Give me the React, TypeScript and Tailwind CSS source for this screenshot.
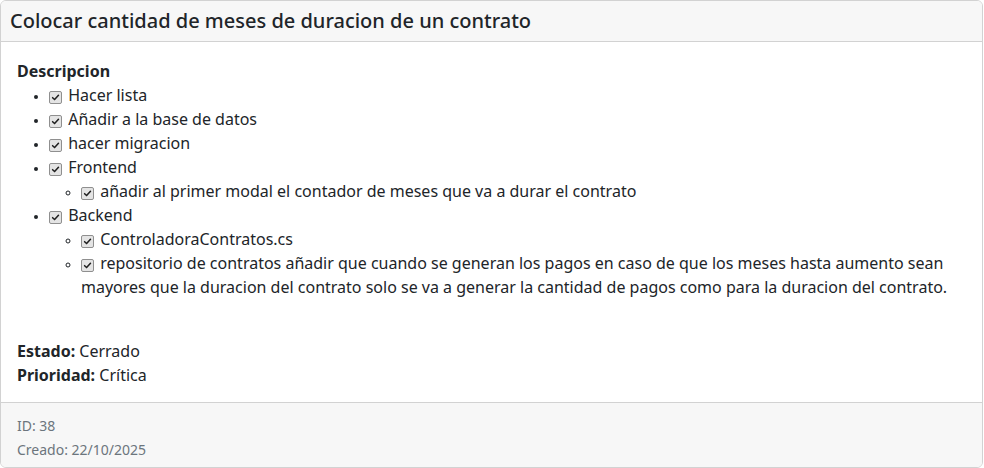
import React from "react";

type Tarea = { texto: string; hijos?: string[] };

const tareas: Tarea[] = [
  { texto: "Hacer lista" },
  { texto: "Añadir a la base de datos" },
  { texto: "hacer migracion" },
  { texto: "Frontend", hijos: ["añadir al primer modal el contador de meses que va a durar el contrato"] },
  {
    texto: "Backend",
    hijos: [
      "ControladoraContratos.cs",
      "repositorio de contratos añadir que cuando se generan los pagos en caso de que los meses hasta aumento sean mayores que la duracion del contrato solo se va a generar la cantidad de pagos como para la duracion del contrato.",
    ],
  },
];

// checkbox marcado y deshabilitado, dibujado a mano
function Check() {
  return (
    <span className="inline-flex items-center justify-center w-[13px] h-[13px] mr-[2px] align-[-1px] rounded-[2px] border border-[#8f8f8f] bg-[#e4e4e4]">
      <svg viewBox="0 0 10 10" className="w-[9px] h-[9px]">
        <path d="M1.8 5.2 L4 7.3 L8.3 2.6" fill="none" stroke="#1f1f1f" strokeWidth="1.7" strokeLinecap="round" strokeLinejoin="round" />
      </svg>
    </span>
  );
}

export default function App() {
  return (
    <div className="w-[983px] h-[468px] bg-white text-[#212529] font-['Noto_Sans',sans-serif] text-base leading-6">
      <div className="h-full flex flex-col border border-[#d2d2d2] rounded-md overflow-hidden">
        <div className="bg-[#f7f7f7] border-b border-[#d2d2d2] px-[9px] py-2">
          <h5 className="text-xl leading-6 font-medium">Colocar cantidad de meses de duracion de un contrato</h5>
        </div>

        <div className="flex-1 px-4 pt-[17px] pb-[15px]">
          <strong className="block font-bold">Descripcion</strong>
          <ul className="list-disc pl-8 mb-10 marker:text-[11px]">
            {tareas.map((t, i) => (
              <li key={i}>
                <Check /> {t.texto}
                {t.hijos && (
                  <ul className="list-[circle] pl-8 marker:text-[10px]">
                    {t.hijos.map((h, j) => (
                      <li key={j}>
                        <Check /> {h}
                      </li>
                    ))}
                  </ul>
                )}
              </li>
            ))}
          </ul>
          <p>
            <strong className="font-bold">Estado:</strong> Cerrado
          </p>
          <p>
            <strong className="font-bold">Prioridad:</strong> Crítica
          </p>
        </div>

        <div className="bg-[#f7f7f7] border-t border-[#d2d2d2] px-4 pt-[10px] pb-[6px] text-[#6c757d]">
          <div>
            <small className="text-sm">ID: 38</small>
          </div>
          <div>
            <small className="text-sm">Creado: 22/10/2025</small>
          </div>
        </div>
      </div>
    </div>
  );
}
